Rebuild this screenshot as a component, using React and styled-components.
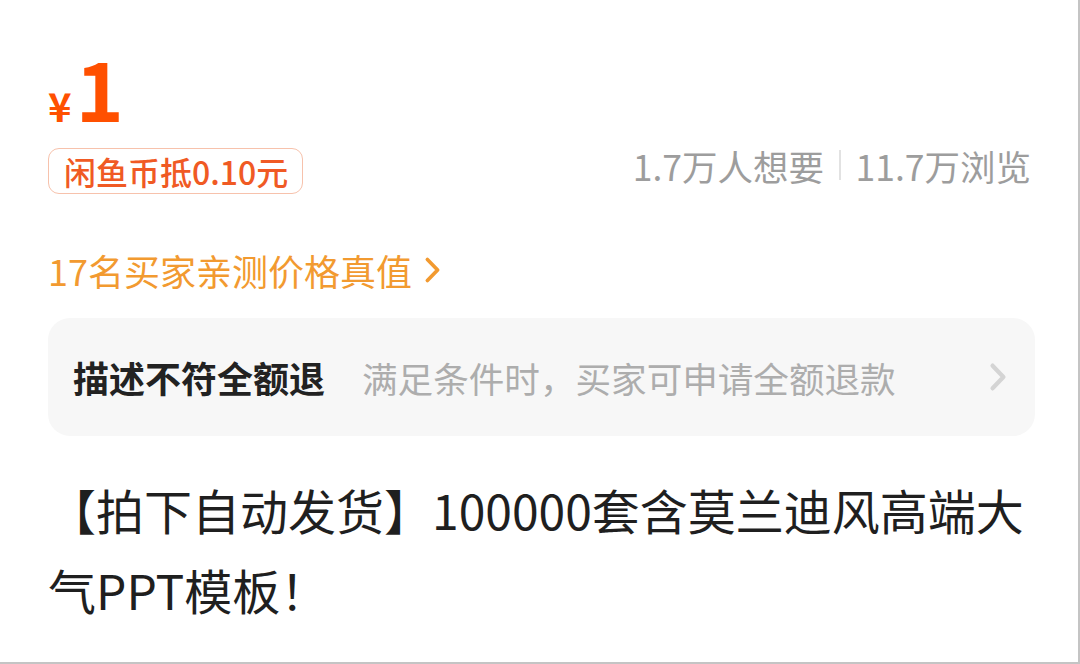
import React from 'react';
import styled, { createGlobalStyle } from 'styled-components';

const Global = createGlobalStyle`
  html, body {
    margin: 0;
    padding: 0;
    background: #ffffff;
  }
  body {
    font-family: "Noto Sans CJK SC", "Noto Sans", sans-serif;
  }
`;

const Page = styled.div`
  box-sizing: border-box;
  width: 1080px;
  height: 664px;
  padding: 46px 43px 0 48px;
  border-right: 2px solid #c4c4c4;
  border-bottom: 2px solid #c4c4c4;
  overflow: hidden;
  display: flex;
  flex-direction: column;
`;

const PriceRow = styled.div`
  display: flex;
  align-items: baseline;
  color: #ff5000;
  font-weight: 700;
  line-height: 1;
`;

const Yen = styled.span`
  font-size: 40px;
  margin-right: 4px;
`;

const Amount = styled.span`
  font-size: 82px;
`;

const InfoRow = styled.div`
  display: flex;
  align-items: center;
  justify-content: space-between;
  margin-top: 20px;
`;

const CoinBadge = styled.div`
  box-sizing: border-box;
  height: 46px;
  display: flex;
  align-items: center;
  padding: 0 14px 0 15px;
  border: 1.5px solid #f7c2ac;
  border-radius: 11px;
  color: #f05a24;
  font-size: 32px;
  font-weight: 500;
`;

const Stats = styled.div`
  display: flex;
  align-items: center;
  color: #9d9d9d;
  font-size: 35.5px;
  margin-top: -12px;
  margin-right: 4px;
`;

const Divider = styled.span`
  width: 1.5px;
  height: 30px;
  background: #e2e2e2;
  margin: 0 15px;
`;

const VerifyLink = styled.div`
  display: flex;
  align-items: center;
  gap: 12px;
  margin-top: 52px;
  color: #f29a30;
  font-size: 36px;
  line-height: 48px;
`;

const RefundCard = styled.div`
  box-sizing: border-box;
  height: 118px;
  margin-top: 24px;
  padding: 0 28px 0 25px;
  border-radius: 22px;
  background: #f7f7f7;
  display: flex;
  align-items: center;
  font-size: 36px;
`;

const RefundTitle = styled.span`
  color: #222222;
  font-weight: 700;
`;

const RefundNote = styled.span`
  flex: 1;
  color: #adadad;
  font-size: 35.6px;
  margin-left: 37px;
`;

const Title = styled.h1`
  margin: 33px 0 0;
  color: #1f1f1f;
  font-size: 48px;
  font-weight: 400;
  line-height: 80px;
  letter-spacing: 0;
`;

const Chevron = ({ color, width, height, weight }) => (
  <svg width={width} height={height} viewBox="0 0 10 16" fill="none" preserveAspectRatio="none">
    <path d="M2 2l6 6-6 6" stroke={color} strokeWidth={weight} strokeLinecap="round" strokeLinejoin="round" />
  </svg>
);

export default function App() {
  return (
    <>
      <Global />
      <Page>
        <PriceRow>
          <Yen>¥</Yen>
          <Amount>1</Amount>
        </PriceRow>
        <InfoRow>
          <CoinBadge>闲鱼币抵0.10元</CoinBadge>
          <Stats>
            <span>1.7万人想要</span>
            <Divider />
            <span>11.7万浏览</span>
          </Stats>
        </InfoRow>
        <VerifyLink>
          <span>17名买家亲测价格真值</span>
          <Chevron color="#f29a30" width={17} height={28} weight={2.2} />
        </VerifyLink>
        <RefundCard>
          <RefundTitle>描述不符全额退</RefundTitle>
          <RefundNote>满足条件时，买家可申请全额退款</RefundNote>
          <Chevron color="#d4d4d4" width={18} height={30} weight={2.4} />
        </RefundCard>
        <Title>【拍下自动发货】100000套含莫兰迪风高端大气PPT模板！</Title>
      </Page>
    </>
  );
}
